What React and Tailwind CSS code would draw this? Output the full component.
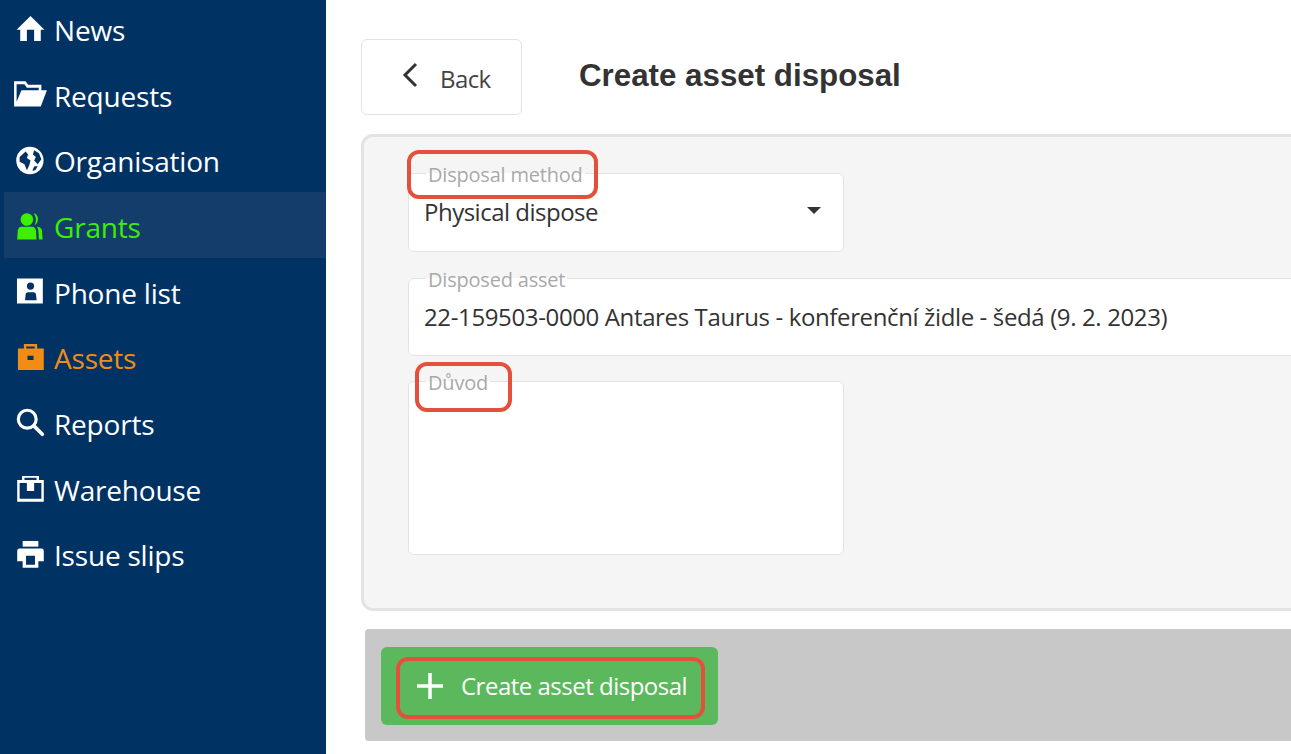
const font = "font-['Open_Sans','Noto_Sans',sans-serif]";
const navy = '#003264';

// Glyph style icons, all on a 24 box
const icons = {
  home: <path d="M12 1.700.5 13h3v9.300H9V13h6v9.300h5.500V13h3z" />,
  folder: (
    <path fillRule="evenodd" d="M-1.600 1H8l2 3h11v4.500h4.600L20.500 22H-1.600zM.5 3.500V18l4-9.500h14.300v-2H9l-2-3z" />
  ),
  globe: (
    <>
      <circle cx="11.500" cy="12" r="11.300" />
      <path fill={navy} d="M3 9l5-4.500L10 7 9 10l3 2-1 4-2 4-2-5-4-2zM15 3.500 19 6l2 5-3 4-3-3 1.500-3L14 7zM15 17l3-.5-2 3.500-2.500.5z" />
    </>
  ),
  users: (
    <>
      <circle cx="9" cy="7" r="5.200" />
      <path d="M4 13h10c1 0 2 1 2.500 3l.5 7.500H1L1.500 16C2 14 3 13 4 13z" />
      <path d="M14.500 1.800c4 0 5.500 7.500.8 10 1.700-3 1.700-7-.8-10zM17.500 13c2 0 3.500 1 4 3l.5 7.500h-3L18.500 16z" />
    </>
  ),
  contact: (
    <path fillRule="evenodd" d="M.8 1.200h21.400V22H.8zM12 4.500a3 3 0 1 0 0 6 3 3 0 0 0 0-6zM7.500 19.200h9.600l-.6-5c-.2-1-1-1.600-2-1.600H10c-1 0-1.800.6-2 1.600z" />
  ),
  briefcase: (
    <path fillRule="evenodd" d="M6.500 4.500V.8h11v3.700H23v17.800H1.600V4.500zM8.500 2.800v1.700h7V2.800zM9.500 10.500V14h5v-3.500z" />
  ),
  search: (
    <g fill="none" stroke="currentColor">
      <circle cx="9.300" cy="9.300" r="7.400" strokeWidth="2.600" />
      <path d="M14.800 14.800 21.800 21.800" strokeWidth="3" strokeLinecap="round" />
    </g>
  ),
  warehouse: (
    <path fillRule="evenodd" d="M5 1.600h14V5h4v18H1V5h4zM7 3.200V5h10V3.200zM3 7.500v13h18v-13h-6V14H9V7.500z" />
  ),
  print: (
    <>
      <path d="M5.500.8h13v4.700h-13z" />
      <path fillRule="evenodd" d="M3 7h18a2 2 0 0 1 2 2v8.500h-4.500V23h-13v-5.500H1V9a2 2 0 0 1 2-2zM8.300 13v7.500h7.400V13z" />
    </>
  ),
};

const items = [
  { label: 'News', icon: 'home' },
  { label: 'Requests', icon: 'folder' },
  { label: 'Organisation', icon: 'globe' },
  { label: 'Grants', icon: 'users', active: true },
  { label: 'Phone list', icon: 'contact' },
  { label: 'Assets', icon: 'briefcase', current: true },
  { label: 'Reports', icon: 'search' },
  { label: 'Warehouse', icon: 'warehouse' },
  { label: 'Issue slips', icon: 'print' },
];

function NavItem({ label, icon, active, current }) {
  let color = 'text-white';
  if (active) color = 'text-[#3cf000] bg-[#143d6b]';
  if (current) color = 'text-[#f28c14]';
  return (
    <li className={`ml-1 h-[65.7px] pl-3 pt-[4px] flex items-center gap-[9px] text-[28px] tracking-[-0.2px] ${color}`}>
      <svg viewBox="0 0 24 24" className="w-[29px] h-[29px] shrink-0 -mt-[2px] overflow-visible" fill="currentColor">
        {icons[icon]}
      </svg>
      <span>{label}</span>
    </li>
  );
}

function Field({ label, className, children }) {
  return (
    <fieldset className={`border border-[#e3e3e3] rounded-md bg-white pl-[15px] pr-4 ${className}`}>
      <legend className="ml-0.5 px-0.5 text-[20px] leading-[22px] tracking-[-0.2px] text-[#a9a9a9]">
        <span className="relative top-[2px]">{label}</span>
      </legend>
      {children}
    </fieldset>
  );
}

export default function App() {
  return (
    <div className={`h-screen w-full flex overflow-hidden bg-white ${font}`}>
      <aside className="w-[326px] shrink-0 bg-[#003264] overflow-hidden">
        <ul className="-mt-[5px]">
          {items.map((item) => (
            <NavItem key={item.label} {...item} />
          ))}
        </ul>
      </aside>

      <main className="flex-1 min-w-0 pl-[35px] pt-[39px]">
        <div className="flex items-start gap-[57px]">
          <button className="w-[161px] h-[76px] border border-[#e3e3e3] rounded-md flex items-center pl-[40px] gap-[22px] text-[24px] tracking-[-0.6px] text-[#444]">
            <svg viewBox="0 0 16 26" className="w-[16px] h-[26px] text-[#333] -mt-1" fill="none" stroke="currentColor" strokeWidth="3">
              <polyline points="14,2 3,13 14,24" />
            </svg>
            <span className="pt-1">Back</span>
          </button>
          <h1 className="mt-[15px] font-['Liberation_Sans',sans-serif] font-bold text-[31.3px] leading-[44px] text-[#333] whitespace-nowrap">
            Create asset disposal
          </h1>
        </div>

        <section className="mt-[19px] w-[1100px] h-[477px] border-[3px] border-[#e3e3e3] rounded-xl bg-[#f5f5f5] pl-[44px] pt-[25px] flex flex-col gap-[15px] relative">
          <Field label="Disposal method" className="w-[436px] h-[90px]">
            <div className="mt-[12px] flex items-center justify-between pr-[6px] text-[24px] leading-[32px] tracking-[-0.5px] text-[#333]">
              <span>Physical dispose</span>
              <span className="-mt-[3px] w-0 h-0 border-x-[7px] border-x-transparent border-t-[7px] border-t-[#333]" />
            </div>
          </Field>
          <Field label="Disposed asset" className="w-[1100px] h-[89px]">
            <div className="mt-[12px] text-[24px] leading-[32px] tracking-[-0.37px] text-[#333] whitespace-nowrap">
              22-159503-0000 Antares Taurus - konferenční židle - šedá (9. 2. 2023)
            </div>
          </Field>
          <Field label="Důvod" className="w-[436px] h-[185px] -mt-px" />
          {/* red marks */}
          <div className="absolute left-[43px] top-[13px] w-[191px] h-[49px] border-[4px] border-[#e4503c] rounded-xl" />
          <div className="absolute left-[51px] top-[225px] w-[97px] h-[50px] border-[4px] border-[#e4503c] rounded-xl" />
        </section>

        <div className="mt-[18px] ml-1 w-[1100px] h-[112px] bg-[#c8c8c8] rounded-sm pl-4 pt-[18px]">
          <button className="relative w-[337px] h-[78px] bg-[#5cb85c] rounded-md flex items-center pl-[36px] gap-[18px] text-[24px] tracking-[-0.5px] text-white">
            <svg viewBox="0 0 26 26" className="w-[26px] h-[26px]" fill="none" stroke="currentColor" strokeWidth="3.5">
              <path d="M0 13h26M13 0v26" />
            </svg>
            Create asset disposal
            <span className="absolute left-[15px] top-[10px] w-[309px] h-[62px] border-[4px] border-[#e4503c] rounded-xl" />
          </button>
        </div>
      </main>
    </div>
  );
}
